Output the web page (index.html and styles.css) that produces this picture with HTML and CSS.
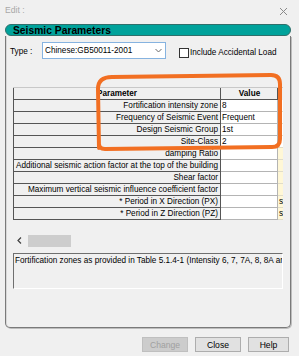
FILE: index.html
```html
<!DOCTYPE html>
<html lang="en">
<head>
    <meta charset="UTF-8">
    <meta name="viewport" content="width=device-width, initial-scale=1.0">
    <title>Edit : Seismic Parameters</title>
    <link rel="stylesheet" href="styles.css">
</head>
<body>
    <div class="topbar">
        <span class="caption">Edit :</span>
        <svg class="close-x" width="9" height="9" viewBox="0 0 9 9">
            <path d="M1 1 L8 8 M8 1 L1 8" stroke="#8a8a8a" stroke-width="1" fill="none"/>
        </svg>
    </div>

    <div class="group">
        <div class="group-title">Seismic Parameters</div>
        <div class="group-body">
            <div class="type-row">
                <span class="type-label">Type :</span>
                <div class="combo">
                    <span>Chinese:GB50011-2001</span>
                    <svg class="combo-arrow" width="7" height="5" viewBox="0 0 7 5">
                        <path d="M0.5 1 L3.5 4 L6.5 1" stroke="#6a6a6a" stroke-width="1" fill="none"/>
                    </svg>
                </div>
                <span class="check"></span>
                <span class="check-label">Include Accidental Load</span>
            </div>

            <div class="grid-view">
                <div class="row head">
                    <div class="cell param">Parameter</div>
                    <div class="cell value">Value</div>
                    <div class="cell unit"></div>
                </div>
                <div class="row">
                    <div class="cell param">Fortification intensity zone</div>
                    <div class="cell value">8</div>
                    <div class="cell unit plain"></div>
                </div>
                <div class="row">
                    <div class="cell param">Frequency of Seismic Event</div>
                    <div class="cell value">Frequent</div>
                    <div class="cell unit plain"></div>
                </div>
                <div class="row">
                    <div class="cell param">Design Seismic Group</div>
                    <div class="cell value">1st</div>
                    <div class="cell unit plain"></div>
                </div>
                <div class="row">
                    <div class="cell param">Site-Class</div>
                    <div class="cell value">2</div>
                    <div class="cell unit plain"></div>
                </div>
                <div class="row">
                    <div class="cell param">damping Ratio</div>
                    <div class="cell value"></div>
                    <div class="cell unit"></div>
                </div>
                <div class="row">
                    <div class="cell param">Additional seismic action factor at the top of the building</div>
                    <div class="cell value"></div>
                    <div class="cell unit"></div>
                </div>
                <div class="row">
                    <div class="cell param">Shear factor</div>
                    <div class="cell value"></div>
                    <div class="cell unit"></div>
                </div>
                <div class="row">
                    <div class="cell param">Maximum vertical seismic influence coefficient factor</div>
                    <div class="cell value"></div>
                    <div class="cell unit"></div>
                </div>
                <div class="row">
                    <div class="cell param">* Period in X Direction (PX)</div>
                    <div class="cell value"></div>
                    <div class="cell unit">s</div>
                </div>
                <div class="row">
                    <div class="cell param">* Period in Z Direction (PZ)</div>
                    <div class="cell value"></div>
                    <div class="cell unit">s</div>
                </div>
            </div>

            <div class="hscroll">
                <svg class="scroll-left" width="5" height="7" viewBox="0 0 5 7">
                    <path d="M4 0.5 L1 3.5 L4 6.5" stroke="#404040" stroke-width="1.2" fill="none"/>
                </svg>
                <div class="thumb"></div>
            </div>

            <div class="desc">Fortification zones as provided in Table 5.1.4-1 (Intensity 6, 7, 7A, 8, 8A ar</div>
        </div>
    </div>

    <div class="buttons">
        <button class="btn" disabled>Change</button>
        <button class="btn">Close</button>
        <button class="btn help">Help</button>
    </div>

    <!-- hand drawn highlight on top of the grid -->
    <svg class="marker" width="299" height="356" viewBox="0 0 299 356">
        <path d="M99 148 L98 89 Q98 77 112 77 L271 75 Q280 75 280 84 L280 139 Q280 147 272 147 L105 149 Q99 149 99 144 Z"
              stroke="#f26f22" stroke-width="4" fill="none" stroke-linejoin="round"/>
    </svg>
</body>
</html>
```

FILE: styles.css
```css
body {
    margin: 0;
    width: 299px;
    height: 356px;
    position: relative;
    overflow: hidden;
    background-color: #f0f0f0;
    font-family: "Liberation Sans", Arial, sans-serif;
    font-size: 8.2px;
    color: #000;
}

.topbar {
    height: 24px;
    display: flex;
    justify-content: space-between;
    align-items: flex-start;
    padding: 5px 11px 0 5px;
    box-sizing: border-box;
}

.caption {
    color: #a8a8a8;
    font-size: 8.6px;
    line-height: 11px;
}

.close-x {
    margin-top: 2px;
}

.group {
    margin-left: 5px;
    width: 286px;
}

.group-title {
    height: 12px;
    box-sizing: border-box;
    background-color: #00a29b;
    border: 1px solid #2f6f6b;
    border-radius: 6px;
    padding-left: 7px;
    font-size: 10.3px;
    font-weight: bold;
    line-height: 11px;
}

.group-body {
    height: 292px;
    box-sizing: border-box;
    border: 1px solid #7a7a7a;
    border-top: none;
    border-radius: 0 0 5px 5px;
    box-shadow: inset 1px 0 0 #d8d8d8, 1px 1px 0 #bdbdbd;
    padding: 6px 0 0 4px;
}

.type-row {
    display: flex;
    align-items: center;
    height: 17px;
}

.type-label {
    width: 32px;
    margin-top: 1px;
}

.combo {
    width: 124px;
    height: 17px;
    box-sizing: border-box;
    border: 1px solid #86b3e0;
    background-color: #fff;
    display: flex;
    align-items: center;
    justify-content: space-between;
    padding: 0 3px 0 2px;
}

.check {
    width: 10px;
    height: 10px;
    box-sizing: border-box;
    border: 1px solid #333;
    background-color: #fff;
    margin: 5px 1px 0 13px;
}

.check-label {
    margin-top: 4px;
}

.grid-view {
    width: 270px;
    height: 146px;
    margin: 28px 0 0 3px;
    overflow: hidden;
}

.row {
    display: flex;
    height: 12px;
    width: 320px;
}

.row.head {
    height: 13px;
    border-top: 1px solid #c8c8c8;
    box-sizing: border-box;
    font-weight: bold;
}

.cell {
    height: 100%;
    box-sizing: border-box;
    white-space: nowrap;
    overflow: hidden;
    line-height: 11px;
}

.param {
    width: 208px;
    flex-shrink: 0;
    border-left: 1px solid #555;
    border-right: 1px solid #555;
    border-bottom: 1px solid #555;
    text-align: right;
    padding-right: 2px;
}

.value {
    width: 57px;
    flex-shrink: 0;
    background-color: #fff;
    border-right: 1px solid #b4b4b4;
    border-bottom: 1px solid #b4b4b4;
    padding-left: 1px;
}

.unit {
    width: 50px;
    flex-shrink: 0;
    background-color: #fff7d6;
    border-bottom: 1px solid #e0dcc8;
    padding-left: 1px;
}

.unit.plain {
    background-color: #fff;
}

.head .param {
    text-align: center;
    padding-right: 0;
}

.head .value {
    background-color: #f0f0f0;
    border-right-color: #555;
    border-bottom-color: #555;
    text-align: center;
}

.head .unit {
    background-color: #f0f0f0;
    border-bottom: none;
}

.hscroll {
    width: 270px;
    height: 15px;
    margin-left: 3px;
    display: flex;
    align-items: center;
}

.scroll-left {
    margin: 0 6px 0 4px;
}

.thumb {
    width: 43px;
    height: 12px;
    background-color: #cdcdcd;
}

.desc {
    width: 270px;
    height: 36px;
    margin: 5px 0 0 3px;
    box-sizing: border-box;
    border: 1px solid;
    border-color: #6f6f6f #ffffff #ffffff #6f6f6f;
    padding: 1px 0 0 1px;
    white-space: nowrap;
    overflow: hidden;
    line-height: 11px;
}

.buttons {
    display: flex;
    justify-content: flex-end;
    gap: 7px;
    margin-top: 9px;
    padding-right: 10px;
}

.btn {
    width: 46px;
    height: 15px;
    padding: 0;
    font-family: inherit;
    font-size: 8.6px;
    color: #000;
    background-color: #e1e1e1;
    border: 1px solid #adadad;
}

.btn:disabled {
    color: #a0a0a0;
    background-color: #cccccc;
    border-color: #bfbfbf;
}

.btn.help {
    width: 41px;
}

.marker {
    position: absolute;
    left: 0;
    top: 0;
    pointer-events: none;
}
```
